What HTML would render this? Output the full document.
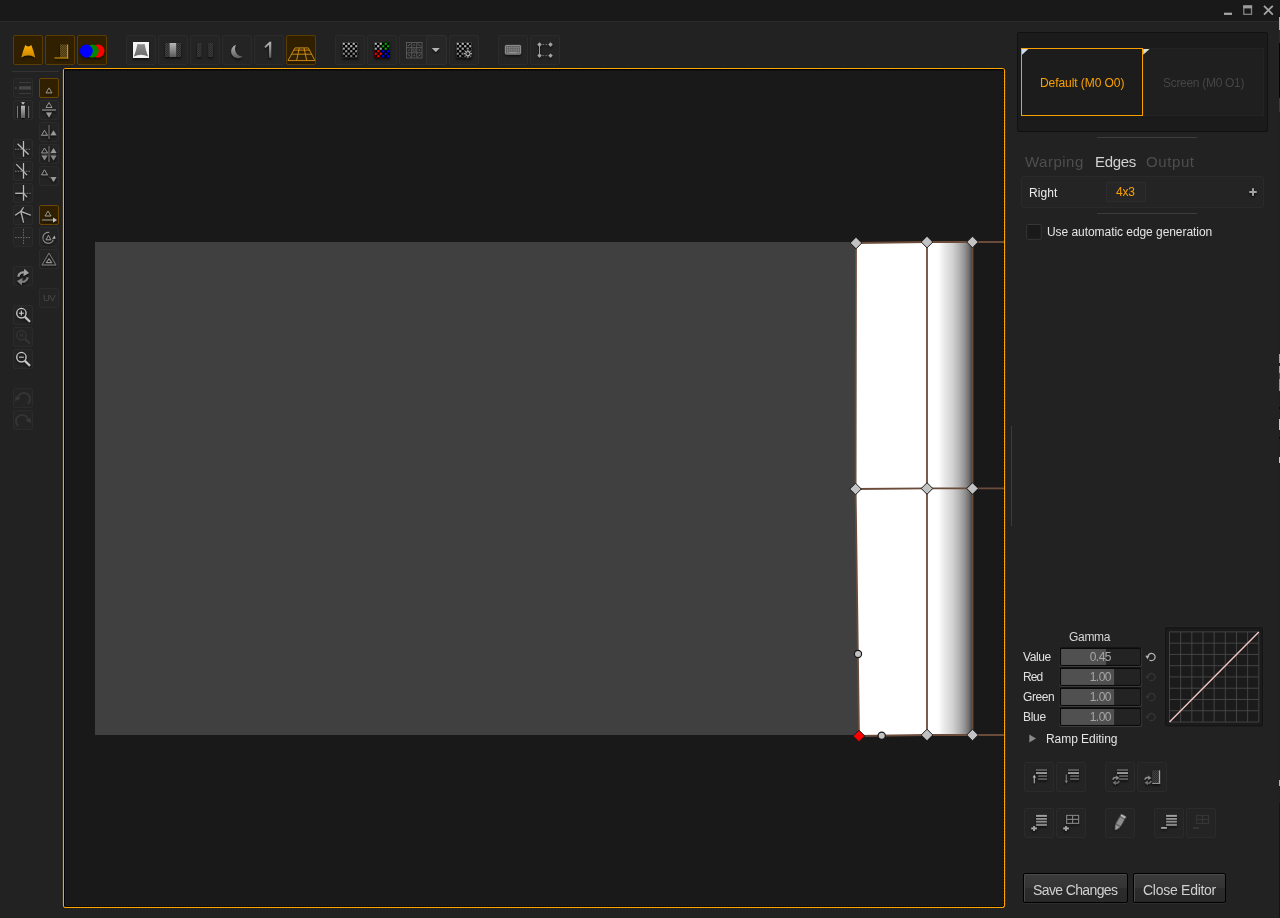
<!DOCTYPE html>
<html><head><meta charset="utf-8">
<style>
*{box-sizing:border-box;margin:0;padding:0}
html,body{width:1280px;height:918px;overflow:hidden;background:#222222;font-family:"Liberation Sans",sans-serif;}
#root{position:relative;width:1280px;height:918px;background:#222222;overflow:hidden}
.abs{position:absolute}
#titlebar{position:absolute;left:0;top:0;width:1280px;height:21px;background:#191919}
#tline{position:absolute;left:0;top:21px;width:1280px;height:1px;background:#2b2b2b}
.tb{position:absolute;width:30px;height:30px;border:1px solid #2b2b2b;border-radius:2px;background:#242424}
.tb.on{background:#302000;border-color:#5a3c00}
.sb{position:absolute;width:20px;height:20px;border:1px solid #2b2b2b;border-radius:2px;background:#242424}
.sb.on{background:#302000;border-color:#6a4600}
.tb svg,.sb svg{position:absolute;left:-1px;top:-1px}
#canvas{position:absolute;left:63px;top:68px;width:942px;height:840px;background:#1a1a1a;border-radius:2px}
.txt{position:absolute;white-space:nowrap;line-height:1;margin-top:1px;will-change:transform}
</style></head><body><div id="root">
<div id="titlebar"></div><div id="tline"></div>
<svg width="0" height="0" style="position:absolute"><defs>
<pattern id="chk" width="5" height="5" patternUnits="userSpaceOnUse"><rect width="5" height="5" fill="#060606"/><rect x="0.150" y="0.150" width="2.150" height="2.150" fill="#c8c8c8"/><rect x="2.650" y="2.650" width="2.150" height="2.150" fill="#c8c8c8"/></pattern><pattern id="chkr" width="5" height="5" patternUnits="userSpaceOnUse"><rect width="5" height="5" fill="#060606"/><rect x="0.150" y="0.150" width="2.150" height="2.150" fill="#ff0000"/><rect x="2.650" y="2.650" width="2.150" height="2.150" fill="#ff0000"/></pattern><pattern id="chkg" width="5" height="5" patternUnits="userSpaceOnUse"><rect width="5" height="5" fill="#060606"/><rect x="0.150" y="0.150" width="2.150" height="2.150" fill="#00a800"/><rect x="2.650" y="2.650" width="2.150" height="2.150" fill="#00a800"/></pattern><pattern id="chkb" width="5" height="5" patternUnits="userSpaceOnUse"><rect width="5" height="5" fill="#060606"/><rect x="0.150" y="0.150" width="2.150" height="2.150" fill="#0000ff"/><rect x="2.650" y="2.650" width="2.150" height="2.150" fill="#0000ff"/></pattern>
<pattern id="hatch" width="2" height="2" patternUnits="userSpaceOnUse"><rect width="2" height="2" fill="#46340f"/><rect width="1" height="1" fill="#6b5220"/><rect x="1" y="1" width="1" height="1" fill="#6b5220"/></pattern>
<pattern id="hatchg" width="2" height="2" patternUnits="userSpaceOnUse"><rect width="2" height="2" fill="#2a2a2a"/><rect width="1" height="1" fill="#424242"/><rect x="1" y="1" width="1" height="1" fill="#424242"/></pattern>
<linearGradient id="og" x1="0" x2="0" y1="0" y2="1"><stop offset="0" stop-color="#ffb000"/><stop offset="1" stop-color="#c98600"/></linearGradient>
<linearGradient id="gg" x1="0" x2="0" y1="0" y2="1"><stop offset="0" stop-color="#8c8c8c"/><stop offset="1" stop-color="#6a6a6a"/></linearGradient>
<linearGradient id="barg" x1="0" x2="0" y1="0" y2="1"><stop offset="0" stop-color="#b8b8b8"/><stop offset="1" stop-color="#5a5a5a"/></linearGradient>
<linearGradient id="chkfade" x1="0" x2="0" y1="0" y2="1"><stop offset="0" stop-color="#000" stop-opacity="0.02"/><stop offset="1" stop-color="#000" stop-opacity="0.42"/></linearGradient>
<filter id="sh" x="-30%" y="-30%" width="160%" height="180%"><feDropShadow dx="0" dy="1.5" stdDeviation="1" flood-color="#000" flood-opacity="0.7"/></filter>
</defs></svg>
<div class="tb on" style="left:13px;top:35px;width:30px"><svg width="30" height="30" viewBox="0 0 30 30"><path filter="url(#sh)" d="M12.3 10.1 Q13.5 11.600 15.300 11.500 Q17 11.600 18.300 10.100 Q20.3 15 22.200 22.500 Q18.500 20.200 15.200 20.300 Q12 20.200 8.300 22.500 Q10.3 15 12.300 10.100Z" fill="url(#og)"/></svg></div>
<div class="tb on" style="left:45px;top:35px;width:30px"><svg width="30" height="30" viewBox="0 0 30 30"><g filter="url(#sh)"><rect x="15" y="9.5" width="7" height="13" fill="url(#hatch)"/><rect x="22" y="9.500" width="1.100" height="14" fill="#d0920e"/><rect x="9.5" y="22.400" width="13.600" height="1.100" fill="#c48a0c"/></g></svg></div>
<div class="tb on" style="left:77px;top:35px;width:30px"><svg width="30" height="30" viewBox="0 0 30 30"><g filter="url(#sh)"><circle cx="20.900" cy="16" r="6.5" fill="#ff0000"/><circle cx="15.200" cy="16" r="6.500" fill="#008800"/><circle cx="9.300" cy="16" r="6.500" fill="#0000ff"/></g></svg></div>
<div class="tb" style="left:126px;top:35px;width:30px"><svg width="30" height="30" viewBox="0 0 30 30"><g filter="url(#sh)"><rect x="7" y="7" width="16" height="16" fill="#f4f4f4"/><path d="M11.400 9 Q15 9.500 18.600 9 Q19.800 15.500 22.100 21.500 Q18.800 19.700 15 19.700 Q11.200 19.700 7.900 21.500 Q10.300 15.500 11.400 9Z" fill="url(#gg)"/></g></svg></div>
<div class="tb" style="left:158px;top:35px;width:30px"><svg width="30" height="30" viewBox="0 0 30 30"><g filter="url(#sh)"><rect x="7" y="8" width="4.5" height="14" fill="url(#hatchg)"/><rect x="11.600" y="8" width="6.8" height="14" fill="url(#barg)"/><rect x="18.500" y="8" width="4.500" height="14" fill="url(#hatchg)"/></g></svg></div>
<div class="tb" style="left:190px;top:35px;width:30px"><svg width="30" height="30" viewBox="0 0 30 30"><g filter="url(#sh)" opacity="0.75"><rect x="7" y="8" width="4.500" height="14" fill="url(#hatchg)"/><rect x="18.300" y="8" width="4.700" height="14" fill="url(#hatchg)"/></g></svg></div>
<div class="tb" style="left:222px;top:35px;width:30px"><svg width="30" height="30" viewBox="0 0 30 30"><path filter="url(#sh)" d="M14.060 9.710A6.900 6.900 0 1 0 20.570 21.550A7.830 7.830 0 0 1 14.060 9.710Z" fill="url(#barg)"/></svg></div>
<div class="tb" style="left:254px;top:35px;width:30px"><svg width="30" height="30" viewBox="0 0 30 30"><path filter="url(#sh)" d="M10.500 11.400L15.500 6.800H17.200V22.800H15V9.700L11.400 12.900Z" fill="url(#barg)"/></svg></div>
<div class="tb on" style="left:286px;top:35px;width:30px"><svg width="30" height="30" viewBox="0 0 30 30"><rect x="1.500" y="25.600" width="27.500" height="3" fill="#241700" opacity="0.9"/><g fill="none" stroke="#e09a1a" stroke-width="0.850"><path d="M9 12.900H22.300L28.900 25.600H2Z"/><path d="M7.800 15.100H23.400M5.500 19.200H25.600"/><path d="M13.300 12.900L10.600 25.600M18 12.900L20.700 25.600"/></g></svg></div>
<div class="tb" style="left:335px;top:35px;width:30px"><svg width="30" height="30" viewBox="0 0 30 30"><g filter="url(#sh)"><rect x="7" y="7" width="16" height="16" fill="url(#chk)"/><rect x="7" y="7" width="16" height="16" fill="url(#chkfade)"/></g></svg></div>
<div class="tb" style="left:367px;top:35px;width:30px"><svg width="30" height="30" viewBox="0 0 30 30"><g filter="url(#sh)"><rect x="7" y="7" width="16" height="16" fill="url(#chk)"/><rect x="7" y="7" width="16" height="16" fill="url(#chkfade)"/><rect x="15" y="7" width="8" height="8" fill="url(#chkg)"/><rect x="7" y="15" width="8" height="8" fill="url(#chkr)"/><rect x="15" y="15" width="8" height="8" fill="url(#chkb)"/></g></svg></div>
<div class="tb" style="left:399px;top:35px;width:48px"><svg width="48" height="30" viewBox="0 0 48 30"><rect x="27.500" y="0.500" width="20" height="29" rx="2" fill="#272727" stroke="#2f2f2f"/><g fill="none" stroke="#5c5c5c" stroke-width="0.9"><rect x="7.500" y="7.500" width="15.500" height="15.500"/><path d="M12.700 7.500V23M17.800 7.500V23M7.500 12.700H23M7.500 17.800H23"/><circle cx="15.250" cy="15.250" r="1.400"/><path d="M9 11.200L11.200 9M19.300 9L21.500 11.200M9 19.300L11.200 21.500M21.500 19.300L19.300 21.500" stroke="#747474"/><path d="M14.300 10H16.200M14.300 20.500H16.200M10 14.300V16.200M20.500 14.300V16.200" stroke="#505050" stroke-width="1.4"/></g><path filter="url(#sh)" d="M32.800 13H40.800L36.800 17Z" fill="#b4b4b4"/></svg></div>
<div class="tb" style="left:449px;top:35px;width:30px"><svg width="30" height="30" viewBox="0 0 30 30"><g filter="url(#sh)"><rect x="7" y="7" width="16" height="16" fill="url(#chk)"/><rect x="7" y="7" width="16" height="16" fill="url(#chkfade)"/><circle cx="18.900" cy="18.700" r="4.800" fill="#242424"/><g stroke="#c4c4c4" stroke-width="1" fill="none"><circle cx="18.900" cy="18.700" r="2.100"/><path d="M18.900 14.600v1.700M18.900 21.100v1.700M14.800 18.700h1.700M21.300 18.700h1.700M16 15.800l1.200 1.200M20.600 20.400l1.200 1.200M21.800 15.800l-1.200 1.200M17.200 20.400l-1.200 1.200"/></g></g></svg></div>
<div class="tb" style="left:498px;top:35px;width:30px"><svg width="30" height="30" viewBox="0 0 30 30"><g filter="url(#sh)"><rect x="7.400" y="10.400" width="15.200" height="8.600" rx="0.600" fill="#3a3a3a" stroke="#949494" stroke-width="1"/><g fill="#9e9e9e"><rect x="8.45" y="11.45" width="1.450" height="1.400"/><rect x="10.40" y="11.45" width="1.450" height="1.400"/><rect x="12.35" y="11.45" width="1.450" height="1.400"/><rect x="14.30" y="11.45" width="1.450" height="1.400"/><rect x="16.25" y="11.45" width="1.450" height="1.400"/><rect x="18.20" y="11.45" width="1.450" height="1.400"/><rect x="20.15" y="11.45" width="1.450" height="1.400"/><rect x="8.45" y="13.35" width="1.450" height="1.400"/><rect x="10.40" y="13.35" width="1.450" height="1.400"/><rect x="12.35" y="13.35" width="1.450" height="1.400"/><rect x="14.30" y="13.35" width="1.450" height="1.400"/><rect x="16.25" y="13.35" width="1.450" height="1.400"/><rect x="18.20" y="13.35" width="1.450" height="1.400"/><rect x="20.15" y="13.35" width="1.450" height="1.400"/><rect x="8.45" y="15.25" width="1.450" height="1.400"/><rect x="10.40" y="15.25" width="1.450" height="1.400"/><rect x="12.35" y="15.25" width="1.450" height="1.400"/><rect x="14.30" y="15.25" width="1.450" height="1.400"/><rect x="16.25" y="15.25" width="1.450" height="1.400"/><rect x="18.20" y="15.25" width="1.450" height="1.400"/><rect x="20.15" y="15.25" width="1.450" height="1.400"/><rect x="8.450" y="17.100" width="1.450" height="1.200"/><rect x="10.400" y="17.100" width="9.200" height="1.200"/><rect x="20.150" y="17.100" width="1.450" height="1.200"/></g></g></svg></div>
<div class="tb" style="left:530px;top:35px;width:30px"><svg width="30" height="30" viewBox="0 0 30 30"><g filter="url(#sh)" stroke="#9a9a9a" fill="#a4a4a4"><path d="M9.500 9.500V20.600" stroke-width="1"/><path d="M12.500 9.500H18M12.500 20.600H18" stroke-width="1" stroke-dasharray="1.600 1.400" stroke="#6a6a6a"/><g stroke="none"><path d="M9.500 7.300l2.200 2.200l-2.200 2.200l-2.200-2.200z"/><path d="M20.500 7.300l2.200 2.200l-2.200 2.200l-2.200-2.200z"/><path d="M9.500 18.400l2.200 2.200l-2.200 2.200l-2.200-2.200z"/><path d="M20.500 18.400l2.200 2.200l-2.200 2.200l-2.200-2.200z"/></g></g></svg></div>
<!--TOPBAR-->
<div class="abs" style="left:12px;top:71px;width:47px;height:1px;background:#333"></div>
<div class="sb" style="left:13px;top:78px"><svg width="20" height="20" viewBox="0 0 20 20"><g fill="#464646"><rect x="6" y="8.2" width="12" height="3.400"/><rect x="6" y="4" width="12" height="1" opacity="0.7"/><rect x="6" y="15" width="12" height="1" opacity="0.7"/><path d="M2.200 8.500L4.200 10L2.200 11.500Z"/></g></svg></div>
<div class="sb" style="left:13px;top:100px"><svg width="20" height="20" viewBox="0 0 20 20"><g filter="url(#sh)"><rect x="8" y="5.800" width="4" height="12.200" fill="url(#barg)"/><rect x="4" y="6" width="0.9" height="12" fill="#808080"/><rect x="15.200" y="6" width="0.9" height="12" fill="#808080"/><path d="M8 2.200H12L10 4.400Z" fill="#d0d0d0"/></g></svg></div>
<div class="sb" style="left:13px;top:139px"><svg width="20" height="20" viewBox="0 0 20 20"><g filter="url(#sh)" fill="none"><path d="M2 10.300H18" stroke="#7a7a7a" stroke-width="1" stroke-dasharray="1.500 1.200" fill="none"/><path d="M10.500 2V17.700" stroke="#bcbcbc" stroke-width="1.150"/><path d="M4.600 4.700L15.600 15.500" stroke="#b4b4b4" stroke-width="1.250"/></g></svg></div>
<div class="sb" style="left:13px;top:161px"><svg width="20" height="20" viewBox="0 0 20 20"><g filter="url(#sh)" fill="none"><path d="M2 10.300H18" stroke="#7a7a7a" stroke-width="1" stroke-dasharray="1.500 1.200" fill="none"/><path d="M10.500 2V17.700" stroke="#bcbcbc" stroke-width="1.150"/><path d="M3.200 3.100L14 14.100" stroke="#b4b4b4" stroke-width="1.250"/></g></svg></div>
<div class="sb" style="left:13px;top:183px"><svg width="20" height="20" viewBox="0 0 20 20"><g filter="url(#sh)" fill="none"><path d="M11 10.300H18" stroke="#7a7a7a" stroke-width="1" stroke-dasharray="1.500 1.200"/><path d="M10.500 2V17.700" stroke="#bcbcbc" stroke-width="1.150"/><path d="M2.200 10.300H10.500" stroke="#bcbcbc" stroke-width="1.250"/><path d="M10.500 10.300L14 14.200" stroke="#b4b4b4" stroke-width="1.200"/></g></svg></div>
<div class="sb" style="left:13px;top:205px"><svg width="20" height="20" viewBox="0 0 20 20"><g filter="url(#sh)" fill="none" stroke="#b8b8b8" stroke-width="1.150"><path d="M10.600 2.300L7.800 6.400L2.200 10.200"/><path d="M7.800 6.400L17.900 10.200"/><path d="M7.800 6.400L10.600 17.600"/></g></svg></div>
<div class="sb" style="left:13px;top:227px"><svg width="20" height="20" viewBox="0 0 20 20"><g fill="none" stroke="#6a6a6a" stroke-width="1" stroke-dasharray="1.500 1.200"><path d="M2 10.500H18"/><path d="M10.500 2V18"/></g></svg></div>
<div class="sb" style="left:13px;top:266px"><svg width="20" height="20" viewBox="0 0 20 20"><g filter="url(#sh)"><path d="M5.300 10.600C5.800 7.200 9.300 5.600 12.200 6.500" fill="none" stroke="#9c9c9c" stroke-width="2.100"/><path d="M11.300 2.800L16 7.100L10.500 9.900Z" fill="#a2a2a2"/><path d="M14.700 11.400C14.200 14.800 10.700 16.400 7.800 15.500" fill="none" stroke="#7e7e7e" stroke-width="2.100"/><path d="M8.700 19.200L4 14.900L9.500 12.100Z" fill="#808080"/></g></svg></div>
<div class="sb" style="left:13px;top:305px"><svg width="20" height="20" viewBox="0 0 20 20"><g filter="url(#sh)" fill="none" stroke="#cacaca"><circle cx="8.400" cy="8.200" r="4.700" stroke-width="1.250"/><path d="M11.800 11.700L17 16.800" stroke-width="2"/><path d="M6 8.200H10.800M8.400 5.800V10.600" stroke-width="1.100"/></g></svg></div>
<div class="sb" style="left:13px;top:327px"><svg width="20" height="20" viewBox="0 0 20 20"><g  fill="none" stroke="#363636"><circle cx="8.400" cy="8.200" r="4.700" stroke-width="1.250"/><path d="M11.800 11.700L17 16.800" stroke-width="2"/><path d="M7.300 6V10.400M9.500 6V10.400M7.300 8.200H9.500" stroke-width="0.9"/></g></svg></div>
<div class="sb" style="left:13px;top:349px"><svg width="20" height="20" viewBox="0 0 20 20"><g filter="url(#sh)" fill="none" stroke="#cacaca"><circle cx="8.400" cy="8.200" r="4.700" stroke-width="1.250"/><path d="M11.800 11.700L17 16.800" stroke-width="2"/><path d="M6 8.200H10.800" stroke-width="1"/></g></svg></div>
<div class="sb" style="left:13px;top:388px"><svg width="20" height="20" viewBox="0 0 20 20"><path d="M4.900 10.300A6.100 6.100 0 1 1 14.700 15.800" fill="none" stroke="#353535" stroke-width="1.800"/><path d="M2 13.300L2.600 8L7.600 10.600Z" fill="#383838"/></svg></div>
<div class="sb" style="left:13px;top:410px"><svg width="20" height="20" viewBox="0 0 20 20"><path d="M15.100 10.300A6.100 6.100 0 1 0 5.300 15.800" fill="none" stroke="#353535" stroke-width="1.800"/><path d="M18 13.300L17.400 8L12.400 10.600Z" fill="#383838"/></svg></div>
<div class="sb on" style="left:39px;top:78px"><svg width="20" height="20" viewBox="0 0 20 20"><g filter="url(#sh)"><path d="M7.0 14.9L10 9.9L13.0 14.9Z" fill="none" stroke="#aaaaaa" stroke-width="0.8"/></g></svg></div>
<div class="sb" style="left:39px;top:100px"><svg width="20" height="20" viewBox="0 0 20 20"><g filter="url(#sh)"><path d="M7.0 7.5L10 2.5L13.0 7.5Z" fill="none" stroke="#aaaaaa" stroke-width="0.8"/><rect x="3" y="9.300" width="14" height="1.400" fill="#7c7c7c"/><path d="M7.0 12.5L10 17.5L13.0 12.5Z" fill="#9a9a9a"/></g></svg></div>
<div class="sb" style="left:39px;top:122px"><svg width="20" height="20" viewBox="0 0 20 20"><g filter="url(#sh)"><path d="M2.5 13.3L5.5 8.3L8.5 13.3Z" fill="none" stroke="#aaaaaa" stroke-width="0.8"/><rect x="9.300" y="3" width="1.400" height="14" fill="#5c5c5c"/><path d="M11.5 13.3L14.5 8.3L17.5 13.3Z" fill="#9a9a9a"/></g></svg></div>
<div class="sb" style="left:39px;top:144px"><svg width="20" height="20" viewBox="0 0 20 20"><g filter="url(#sh)"><path d="M2.5 9.0L5.5 4.0L8.5 9.0Z" fill="none" stroke="#aaaaaa" stroke-width="0.8"/><path d="M11.5 9.0L14.5 4.0L17.5 9.0Z" fill="#9a9a9a"/><rect x="9.300" y="2" width="1.400" height="16" fill="#5c5c5c"/><rect x="3" y="9.600" width="14" height="0.8" fill="#444"/><path d="M2.5 11.5L5.5 16.5L8.5 11.5Z" fill="#8a8a8a"/><path d="M11.5 11.5L14.5 16.5L17.5 11.5Z" fill="#8a8a8a"/></g></svg></div>
<div class="sb" style="left:39px;top:166px"><svg width="20" height="20" viewBox="0 0 20 20"><g filter="url(#sh)"><path d="M2.5 8.8L5.5 3.8L8.5 8.8Z" fill="none" stroke="#aaaaaa" stroke-width="0.8"/><path d="M8.500 9.500L12 12.500" stroke="#5a5a5a" stroke-width="1" stroke-dasharray="1 1"/><path d="M11.5 11.0L14.5 16.0L17.5 11.0Z" fill="#9a9a9a"/></g></svg></div>
<div class="sb on" style="left:39px;top:205px"><svg width="20" height="20" viewBox="0 0 20 20"><g filter="url(#sh)"><path d="M6.0 11.0L9 6.0L12.0 11.0Z" fill="none" stroke="#aaaaaa" stroke-width="0.8"/><rect x="3" y="14.400" width="12" height="1.200" fill="#868686"/><path d="M14 12.500L18 15L14 17.500Z" fill="#c4c4c4"/></g></svg></div>
<div class="sb" style="left:39px;top:227px"><svg width="20" height="20" viewBox="0 0 20 20"><g filter="url(#sh)"><path d="M7.0 12.75L9.5 8.25L12.0 12.75Z" fill="none" stroke="#aaaaaa" stroke-width="0.8"/><path d="M14.300 12.800A5.400 5.400 0 1 1 10.300 5.500" fill="none" stroke="#909090" stroke-width="1.050"/><path d="M13.300 11.900L16.600 11.500L15.400 8.600Z" fill="#b8b8b8"/></g></svg></div>
<div class="sb" style="left:39px;top:249px"><svg width="20" height="20" viewBox="0 0 20 20"><g filter="url(#sh)" fill="none" stroke="#7c7c7c" stroke-width="0.950"><path d="M10 4L17 16H3Z"/><path d="M10 9.700L12.700 13.600H7.300Z" stroke="#a4a4a4"/></g></svg></div>
<div class="sb" style="left:39px;top:288px"><svg width="20" height="20" viewBox="0 0 20 20"></svg></div>
<div class="txt" style="left:43.2px;top:291.600px;font-size:9.600px;color:#4b4b4b;letter-spacing:-0.8px">UV</div>
<!--LEFTBAR-->
<svg class="abs" style="left:0;top:0" width="1280" height="918" viewBox="0 0 1280 918">
<defs>
<linearGradient id="fade" x1="0" x2="1" y1="0" y2="0">
<stop offset="0" stop-color="#fff"/><stop offset="0.246" stop-color="#fff"/><stop offset="0.31" stop-color="#f5f5f5"/><stop offset="0.38" stop-color="#e9e9e9"/><stop offset="0.56" stop-color="#d2d2d2"/><stop offset="0.712" stop-color="#b2b2b2"/><stop offset="0.829" stop-color="#929292"/><stop offset="0.916" stop-color="#727272"/><stop offset="0.971" stop-color="#525252"/><stop offset="1" stop-color="#404040"/>
</linearGradient>
</defs>
<rect x="63.5" y="68.5" width="941" height="839" rx="2.5" fill="#191919" stroke="#fda500" stroke-width="1.2"/>
<path d="M64.5 906.500V69.500H1003.500" fill="none" stroke="#03030c" stroke-width="1"/>
<path d="M66 70.500H1003" fill="none" stroke="#0a0a0a" stroke-width="1" stroke-dasharray="2 1" opacity="0.85"/>
<path d="M1003.500 70V906.500H65" fill="none" stroke="#05050a" stroke-width="1" stroke-dasharray="2 1" opacity="0.85"/>
<rect x="95" y="242" width="765" height="493" fill="#404040"/>
<path d="M856 243 L927 242 L927 735 L859 736 L855.600 489 Z" fill="#ffffff"/>
<rect x="927" y="242" width="45.5" height="493" fill="url(#fade)"/>
<rect x="859" y="735.5" width="114" height="3" fill="#191919"/>
<g fill="none" stroke="#6b4b3a" stroke-width="1.800">
<path d="M856 243 L927 242 L972.5 242 L1004 242"/>
<path d="M855.600 489 L927 488.3 L972.5 488.3 L1004 488.3"/>
<path d="M859 736 L927 735 L972.5 735 L1004 735"/>
<path d="M856 243 L855.600 489 L859 736"/>
<path d="M927 242 V735"/>
<path d="M972.5 242 V735"/>
</g>
<g fill="#c2c2c2" stroke="#181818" stroke-width="1">
<path d="M856.0 237.2l5.8 5.8l-5.8 5.8l-5.8 -5.8z"/>
<path d="M927.0 236.2l5.8 5.8l-5.8 5.8l-5.8 -5.8z"/>
<path d="M972.5 236.2l5.8 5.8l-5.8 5.8l-5.8 -5.8z"/>
<path d="M855.5 483.2l5.8 5.8l-5.8 5.8l-5.8 -5.8z"/>
<path d="M927.0 482.7l5.8 5.8l-5.8 5.8l-5.8 -5.8z"/>
<path d="M972.5 482.7l5.8 5.8l-5.8 5.8l-5.8 -5.8z"/>
<path d="M927.0 729.2l5.8 5.8l-5.8 5.8l-5.8 -5.8z"/>
<path d="M972.5 729.2l5.8 5.8l-5.8 5.8l-5.8 -5.8z"/>
<circle cx="858" cy="654" r="3.600" stroke-width="1.200"/>
<circle cx="881.700" cy="735.700" r="3.600" stroke-width="1.200"/>
<path d="M859.0 730.2l5.8 5.8l-5.8 5.8l-5.8 -5.8z" fill="#ff0000"/>
</g>
<rect x="1011" y="426" width="1" height="100" fill="#3b3b3b"/>
</svg>
<!--CANVAS-->
<svg class="abs" style="left:1220px;top:0" width="60" height="21" viewBox="1220 0 60 21"><rect x="1224" y="12.700" width="8" height="2.200" fill="#a8a8a8"/><rect x="1243.800" y="6" width="7.700" height="8.300" fill="none" stroke="#848484" stroke-width="1.300"/><rect x="1243.200" y="5.400" width="8.900" height="3" fill="#9c9c9c"/><path d="M1264 5.800L1272.800 14.600M1272.800 5.800L1264 14.600" stroke="#a6a6a6" stroke-width="1.800" fill="none"/></svg>
<div class="abs" style="left:1017px;top:32px;width:251px;height:100px;background:#1b1b1b;border:1px solid #111111;border-radius:2px"></div>
<div class="abs" style="left:1143px;top:48px;width:121px;height:68px;background:#1f1f1f;border:1px solid #232323"></div>
<div class="abs" style="left:1021px;top:48px;width:122px;height:68px;background:#1c1c1c;border:1px solid #f9a000"></div>
<svg class="abs" style="left:1021px;top:48px" width="130" height="10"><path d="M1 1H7.300L1 6.800Z" fill="#cfdcf0"/><path d="M122.200 1H128.600L122.200 6.800Z" fill="#dde0d0"/></svg>
<div class="txt" style="left:1040.0px;top:76.3px;font-size:12px;color:#f9a000;letter-spacing:-0.07px;">Default (M0 O0)</div>
<div class="txt" style="left:1162.8px;top:76.3px;font-size:12px;color:#454545;letter-spacing:-0.3px;">Screen (M0 O1)</div>
<div class="abs" style="left:1097px;top:137px;width:100px;height:1px;background:#3c3c3c"></div>
<div class="txt" style="left:1024.8px;top:152.8px;font-size:15px;color:#4e4e4e;letter-spacing:0.49px;">Warping</div>
<div class="txt" style="left:1094.6px;top:152.8px;font-size:15px;color:#d2d2d2;letter-spacing:-0.34px;">Edges</div>
<div class="txt" style="left:1146.4px;top:152.8px;font-size:15px;color:#4e4e4e;letter-spacing:0.6px;">Output</div>
<div class="abs" style="left:1021px;top:176px;width:243px;height:32px;background:#242424;border:1px solid #2a2a2a;border-radius:2px"></div>
<div class="txt" style="left:1029.4px;top:185.6px;font-size:12px;color:#ececec;letter-spacing:0.1px;">Right</div>
<div class="abs" style="left:1106px;top:182px;width:40px;height:20px;background:#262626;border:1px solid #2c2c2c"></div>
<div class="txt" style="left:1116.3px;top:185.0px;font-size:12px;color:#f9a000;letter-spacing:-0.2px;">4x3</div>
<svg class="abs" style="left:1246px;top:185px" width="14" height="16"><path filter="url(#sh)" d="M7 3.300V10.700M3.300 7H10.700" stroke="#a2a2a2" stroke-width="2"/></svg>
<div class="abs" style="left:1097px;top:213px;width:100px;height:1px;background:#3c3c3c"></div>
<svg class="abs" style="left:1024px;top:222px" width="20" height="20"><rect x="2.700" y="2.500" width="14.500" height="14.800" rx="1" fill="#1a1a1a" stroke="#363636" stroke-width="1"/></svg>
<div class="txt" style="left:1046.7px;top:225.0px;font-size:12px;color:#e4e4e4;letter-spacing:-0.055px;">Use automatic edge generation</div>
<div class="txt" style="left:1069.0px;top:630.3px;font-size:12px;color:#d6d6d6;letter-spacing:-0.3px;">Gamma</div>
<div class="txt" style="left:1023.3px;top:650.0px;font-size:12px;color:#e0e0e0;letter-spacing:-0.4px;">Value</div>
<svg class="abs" style="left:1058px;top:646.0px" width="86" height="22" viewBox="1058 646.0 86 22"><rect x="1059.200" y="647.4" width="82.900" height="19.600" rx="2.500" fill="#393939"/><rect x="1059.700" y="647.2" width="81.500" height="18.800" rx="2" fill="#0b0b0b"/><rect x="1061.100" y="649.0" width="79.200" height="15.900" fill="#232323"/><rect x="1061.100" y="649.0" width="45" height="15.900" fill="#505050"/></svg>
<div class="txt" style="left:1088.9px;top:650.0px;font-size:12px;color:#a6a6a6;letter-spacing:-0.5px;width:22px;text-align:right">0.45</div>
<svg class="abs" style="left:1145px;top:651px" width="12" height="12" viewBox="0 0 12 12"><path d="M3.120 4.770A3.600 3.600 0 1 1 4.440 8.950" fill="none" stroke="#b4b4b4" stroke-width="1.250"/><path d="M0.400 4.700L4.500 4.500L2.500 8.200Z" fill="#b4b4b4"/></svg>
<div class="txt" style="left:1022.8px;top:670.0px;font-size:12px;color:#e0e0e0;letter-spacing:-0.9px;">Red</div>
<svg class="abs" style="left:1058px;top:666.0px" width="86" height="22" viewBox="1058 666.0 86 22"><rect x="1059.200" y="667.4" width="82.900" height="19.600" rx="2.500" fill="#393939"/><rect x="1059.700" y="667.2" width="81.500" height="18.800" rx="2" fill="#0b0b0b"/><rect x="1061.100" y="669.0" width="79.200" height="15.900" fill="#232323"/><rect x="1061.100" y="669.0" width="53" height="15.900" fill="#505050"/></svg>
<div class="txt" style="left:1088.9px;top:670.0px;font-size:12px;color:#a6a6a6;letter-spacing:-0.5px;width:22px;text-align:right">1.00</div>
<svg class="abs" style="left:1145px;top:671px" width="12" height="12" viewBox="0 0 12 12"><path d="M3.120 4.770A3.600 3.600 0 1 1 4.440 8.950" fill="none" stroke="#363636" stroke-width="1.250"/><path d="M0.400 4.700L4.500 4.500L2.500 8.200Z" fill="#363636"/></svg>
<div class="txt" style="left:1022.8px;top:690.0px;font-size:12px;color:#e0e0e0;letter-spacing:-0.4px;">Green</div>
<svg class="abs" style="left:1058px;top:686.0px" width="86" height="22" viewBox="1058 686.0 86 22"><rect x="1059.200" y="687.4" width="82.900" height="19.600" rx="2.500" fill="#393939"/><rect x="1059.700" y="687.2" width="81.500" height="18.800" rx="2" fill="#0b0b0b"/><rect x="1061.100" y="689.0" width="79.200" height="15.900" fill="#232323"/><rect x="1061.100" y="689.0" width="53" height="15.900" fill="#505050"/></svg>
<div class="txt" style="left:1088.9px;top:690.0px;font-size:12px;color:#a6a6a6;letter-spacing:-0.5px;width:22px;text-align:right">1.00</div>
<svg class="abs" style="left:1145px;top:691px" width="12" height="12" viewBox="0 0 12 12"><path d="M3.120 4.770A3.600 3.600 0 1 1 4.440 8.950" fill="none" stroke="#363636" stroke-width="1.250"/><path d="M0.400 4.700L4.500 4.500L2.500 8.200Z" fill="#363636"/></svg>
<div class="txt" style="left:1022.8px;top:710.0px;font-size:12px;color:#e0e0e0;letter-spacing:-0.3px;">Blue</div>
<svg class="abs" style="left:1058px;top:706.0px" width="86" height="22" viewBox="1058 706.0 86 22"><rect x="1059.200" y="707.4" width="82.900" height="19.600" rx="2.500" fill="#393939"/><rect x="1059.700" y="707.2" width="81.500" height="18.800" rx="2" fill="#0b0b0b"/><rect x="1061.100" y="709.0" width="79.200" height="15.900" fill="#232323"/><rect x="1061.100" y="709.0" width="53" height="15.900" fill="#505050"/></svg>
<div class="txt" style="left:1088.9px;top:710.0px;font-size:12px;color:#a6a6a6;letter-spacing:-0.5px;width:22px;text-align:right">1.00</div>
<svg class="abs" style="left:1145px;top:711px" width="12" height="12" viewBox="0 0 12 12"><path d="M3.120 4.770A3.600 3.600 0 1 1 4.440 8.950" fill="none" stroke="#363636" stroke-width="1.250"/><path d="M0.400 4.700L4.500 4.500L2.500 8.200Z" fill="#363636"/></svg>
<svg class="abs" style="left:1164px;top:626px" width="100" height="101" viewBox="1164 626 100 101"><rect x="1164.400" y="626.600" width="99.200" height="100.200" rx="2.500" fill="#2a2a2a"/><rect x="1164.800" y="627" width="98.400" height="99.400" rx="2" fill="#141414"/><rect x="1166" y="628.200" width="96" height="97" rx="1" fill="#1b1b1b"/><g stroke="#474747" stroke-width="0.9"><path d="M1169.50 631.9V722.0M1169.5 631.90H1258.8"/><path d="M1180.66 631.9V722.0M1169.5 643.16H1258.8"/><path d="M1191.83 631.9V722.0M1169.5 654.42H1258.8"/><path d="M1202.99 631.9V722.0M1169.5 665.69H1258.8"/><path d="M1214.15 631.9V722.0M1169.5 676.95H1258.8"/><path d="M1225.31 631.9V722.0M1169.5 688.21H1258.8"/><path d="M1236.47 631.9V722.0M1169.5 699.48H1258.8"/><path d="M1247.64 631.9V722.0M1169.5 710.74H1258.8"/><path d="M1258.80 631.9V722.0M1169.5 722.00H1258.8"/></g><path d="M1169.5 722.0L1258.8 631.9" stroke="#f3c6c6" stroke-width="1.400"/></svg>
<svg class="abs" style="left:1028px;top:733px" width="10" height="12"><path d="M1.300 1.500V9.500L8 5.500Z" fill="#8a8a8a"/></svg>
<div class="txt" style="left:1045.8px;top:731.6px;font-size:12px;color:#e4e4e4;letter-spacing:-0.05px;">Ramp Editing</div>
<div class="tb" style="left:1024px;top:762px"><svg width="30" height="30" viewBox="0 0 30 30"><g filter="url(#sh)"><rect x="12" y="7.100" width="11" height="1.800" fill="#5c5c5c"/><rect x="12" y="10.100" width="11" height="1.900" fill="#999999"/><rect x="14.200" y="13.200" width="8.800" height="1.800" fill="#5c5c5c"/><rect x="14.200" y="16.200" width="8.800" height="1.800" fill="#5c5c5c"/><rect x="9.800" y="14" width="1" height="7.200" fill="#b0b0b0"/><path d="M8.700 15.600L10.300 12.800L11.900 15.600Z" fill="#b8b8b8"/></g></svg></div>
<div class="tb" style="left:1056px;top:762px"><svg width="30" height="30" viewBox="0 0 30 30"><g filter="url(#sh)"><rect x="12" y="7.100" width="11" height="1.800" fill="#5c5c5c"/><rect x="12" y="10.100" width="11" height="1.900" fill="#999999"/><rect x="14.200" y="13.200" width="8.800" height="1.800" fill="#5c5c5c"/><rect x="14.200" y="16.200" width="8.800" height="1.800" fill="#5c5c5c"/><rect x="9.800" y="12.400" width="1" height="7" fill="#7a7a7a"/><path d="M8.700 18.700L10.300 21.300L11.900 18.700Z" fill="#7e7e7e"/></g></svg></div>
<div class="tb" style="left:1105px;top:762px"><svg width="30" height="30" viewBox="0 0 30 30"><g filter="url(#sh)"><rect x="12" y="7.100" width="11" height="1.800" fill="#5c5c5c"/><rect x="12" y="10.100" width="11" height="1.900" fill="#999999"/><rect x="14.200" y="13.200" width="8.800" height="1.800" fill="#5c5c5c"/><rect x="14.200" y="16.200" width="8.800" height="1.800" fill="#5c5c5c"/><path d="M8 17.700C8.200 15.600 10 15.300 11.600 15.600" fill="none" stroke="#8e8e8e" stroke-width="1.400"/><path d="M11.200 13.500L14.300 15.900L11.200 18Z" fill="#8e8e8e"/><path d="M14 18.900C13.800 21 12 21.300 10.400 21" fill="none" stroke="#727272" stroke-width="1.400"/><path d="M10.800 18.600L7.700 20.800L10.800 23.100Z" fill="#727272"/></g></svg></div>
<div class="tb" style="left:1137px;top:762px"><svg width="30" height="30" viewBox="0 0 30 30"><g filter="url(#sh)"><rect x="15.200" y="8.300" width="6.800" height="12.700" fill="url(#hatchg)"/><rect x="21.900" y="8.300" width="1.200" height="13.700" fill="#a8a8a8"/><rect x="15.200" y="20.900" width="7.900" height="1.100" fill="#909090"/><path d="M8 17.700C8.200 15.600 10 15.300 11.600 15.600" fill="none" stroke="#8e8e8e" stroke-width="1.400"/><path d="M11.200 13.500L14.300 15.900L11.200 18Z" fill="#8e8e8e"/><path d="M14 18.900C13.800 21 12 21.300 10.400 21" fill="none" stroke="#727272" stroke-width="1.400"/><path d="M10.800 18.600L7.700 20.800L10.800 23.100Z" fill="#727272"/></g></svg></div>
<div class="tb" style="left:1024px;top:808px"><svg width="30" height="30" viewBox="0 0 30 30"><g filter="url(#sh)"><rect x="12.100" y="6.9" width="10.800" height="1.9" fill="#a0a0a0"/><rect x="12.100" y="10" width="10.800" height="1.7" fill="#969696"/><rect x="12.100" y="12.9" width="10.800" height="1.6" fill="#8e8e8e"/><rect x="12.100" y="15.9" width="10.800" height="2.0" fill="#868686"/><path d="M10.050 17.900V22.900M7.200 20.400H12.900" stroke="#a8a8a8" stroke-width="1.700" fill="none"/></g></svg></div>
<div class="tb" style="left:1056px;top:808px"><svg width="30" height="30" viewBox="0 0 30 30"><g filter="url(#sh)"><g fill="none" stroke="#868686" stroke-width="1"><rect x="10.600" y="7.400" width="12" height="8"/><path d="M16.600 7.400V15.400M10.600 11.400H22.600"/></g><path d="M10.050 17.900V22.900M7.200 20.400H12.900" stroke="#a8a8a8" stroke-width="1.700" fill="none"/></g></svg></div>
<div class="tb" style="left:1105px;top:808px"><svg width="30" height="30" viewBox="0 0 30 30"><g filter="url(#sh)" transform="rotate(30 14.400 15)"><rect x="11.700" y="9.400" width="5.400" height="8" fill="#8e8e8e"/><rect x="11.700" y="6.400" width="5.400" height="2" fill="#cfcfcf"/><path d="M11.700 18.300H17.100L14.400 23.200Z" fill="#a0a0a0"/></g></svg></div>
<div class="tb" style="left:1154px;top:808px"><svg width="30" height="30" viewBox="0 0 30 30"><g filter="url(#sh)"><rect x="12.100" y="6.9" width="10.800" height="1.9" fill="#a0a0a0"/><rect x="12.100" y="10" width="10.800" height="1.7" fill="#969696"/><rect x="12.100" y="12.9" width="10.800" height="1.6" fill="#8e8e8e"/><rect x="12.100" y="15.9" width="10.800" height="2.0" fill="#868686"/><path d="M7.100 19.900H12.900" stroke="#aeaeae" stroke-width="1.600" fill="none"/></g></svg></div>
<div class="tb" style="left:1186px;top:808px"><svg width="30" height="30" viewBox="0 0 30 30"><g><g fill="none" stroke="#383838" stroke-width="1"><rect x="10.600" y="7.400" width="12" height="8"/><path d="M16.600 7.400V15.400M10.600 11.400H22.600"/></g><path d="M7.100 19.900H12.900" stroke="#383838" stroke-width="1.600" fill="none"/></g></svg></div>
<div class="abs" style="left:1023px;top:873px;width:104.5px;height:30px;border:1px solid #000;border-radius:2px;background:linear-gradient(#3b3b3b 0%,#343434 48%,#2c2c2c 52%,#282828 100%);box-shadow:inset 1px 1px 0 #4a4a4a,0 1px 0 #2e2e2e"></div>
<div class="abs" style="left:1133px;top:873px;width:92.500px;height:30px;border:1px solid #000;border-radius:2px;background:linear-gradient(#3b3b3b 0%,#343434 48%,#2c2c2c 52%,#282828 100%);box-shadow:inset 1px 1px 0 #4a4a4a,0 1px 0 #2e2e2e"></div>
<div class="txt" style="left:1032.5px;top:881.9px;font-size:14px;color:#d0d0d0;letter-spacing:-0.62px;">Save Changes</div>
<div class="txt" style="left:1142.5px;top:881.9px;font-size:14px;color:#d0d0d0;letter-spacing:-0.27px;">Close Editor</div>
<div class="abs" style="left:1279px;top:22px;width:1px;height:896px;background:#1e1e2c"></div>
<div class="abs" style="left:1279px;top:17px;width:1px;height:13px;background:#d8b050"></div>
<div class="abs" style="left:1279px;top:30px;width:1px;height:13px;background:#2a2a2a"></div>
<div class="abs" style="left:1279px;top:43px;width:1px;height:55px;background:#050505"></div>
<div class="abs" style="left:1279px;top:98px;width:1px;height:14px;background:#3a3a3a"></div>
<div class="abs" style="left:1279px;top:354px;width:1px;height:9px;background:#c8a83c"></div>
<div class="abs" style="left:1279px;top:366px;width:1px;height:7px;background:#e0a030"></div>
<div class="abs" style="left:1279px;top:373px;width:1px;height:6px;background:#a01080"></div>
<div class="abs" style="left:1279px;top:379px;width:1px;height:12px;background:#e08030"></div>
<div class="abs" style="left:1279px;top:407px;width:1px;height:2px;background:#0a0a0a"></div>
<div class="abs" style="left:1279px;top:419px;width:1px;height:11px;background:#c8c8c8"></div>
<div class="abs" style="left:1279px;top:437px;width:1px;height:2px;background:#0a0a0a"></div>
<div class="abs" style="left:1279px;top:457px;width:1px;height:6px;background:#c8c8c8"></div>
<div class="abs" style="left:1279px;top:780px;width:1px;height:6px;background:#b0b0b8"></div>
<div class="abs" style="left:1279px;top:803px;width:1px;height:115px;background:#141414"></div>
<!--RIGHT3-->
</div></body></html>
